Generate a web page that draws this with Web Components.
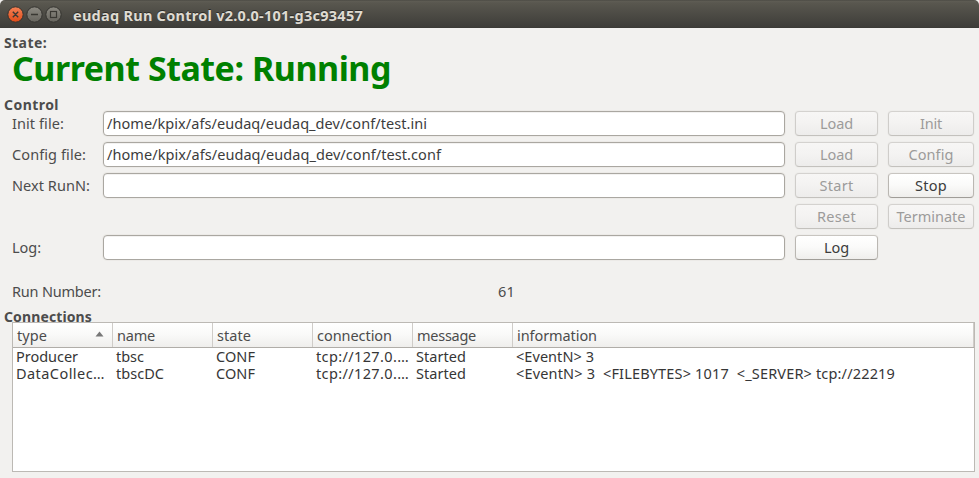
<!DOCTYPE html>
<html lang="en">
<head>
<meta charset="utf-8">
<title>eudaq Run Control</title>
<style>
html,body{margin:0;height:100%}
body{font:14.5px "Noto Sans","Open Sans",sans-serif;color:#4c4c4c;background:#f2f1ef;overflow:hidden}
</style>
</head>
<body>
<run-control></run-control>
<script>
const define = (name, html, setup) => customElements.define(name, class extends HTMLElement {
  connectedCallback() {
    if (this.shadowRoot) return;
    this.attachShadow({mode: 'open'}).innerHTML = html;
    if (setup) setup.call(this, this.shadowRoot);
  }
});

/* Text tracked to a given advance width (attribute w, px). */
define('fit-text', `<style>:host{display:inline-block;white-space:pre}span{display:inline-block}</style><span><slot></slot></span>`, function (root) {
  const span = root.querySelector('span'), w = +this.getAttribute('w');
  const n = this.textContent.length;
  if (w && n) {
    span.style.letterSpacing = ((w - span.getBoundingClientRect().width) / n) + 'px';
    this.style.width = w + 'px';
  }
});

define('title-bar', `<style>
:host{display:flex;align-items:center;height:28px;box-sizing:border-box;padding:1px 0 0 7px;gap:10px;color:#dfdbd2;font-weight:700;font-size:14.5px;line-height:26px;
background:linear-gradient(#45443f 0,#5f5d54 1px,#59574f 3px,#3e3d39 27px,#393834 28px);border-radius:5px 5px 0 0;text-shadow:0 -1px #2d2c28}
svg{display:block}
</style>
<svg width="56" height="18" viewBox="0 0 56 18">
<defs><linearGradient id="o" x2="0" y2="1"><stop stop-color="#f58256"/><stop offset="1" stop-color="#df4b18"/></linearGradient>
<linearGradient id="g" x2="0" y2="1"><stop stop-color="#8d8b83"/><stop offset="1" stop-color="#66645d"/></linearGradient></defs>
<g stroke="#34332f"><circle cx="8.5" cy="8.5" r="7.7" fill="url(#o)"/><circle cx="27.5" cy="8.5" r="7.7" fill="url(#g)"/><circle cx="46.5" cy="8.5" r="7.7" fill="url(#g)"/></g>
<g fill="none" stroke="#393833" stroke-width="1.4"><path d="M5.8 5.8l5.4 5.4M11.2 5.8l-5.4 5.4M24 8.5h7"/><rect x="43.5" y="5.5" width="6" height="6" stroke-width="1.2"/></g>
</svg><slot></slot>`);

define('group-title', `<style>:host{display:block;font-weight:700;font-size:14px;padding-left:4px;white-space:nowrap}</style><slot></slot>`);

define('text-field', `<style>:host{display:block;box-sizing:border-box;height:25px;line-height:23px;border:1px solid #aaa7a1;border-radius:4px;background:#fff;padding-left:3px;color:#3c3c3c;box-shadow:0 0 0 1px #eceae7,inset 0 1px #f3f2f1}</style><slot></slot>`);

define('push-button', `<style>
:host{display:block;box-sizing:border-box;height:25px;line-height:23px;text-align:center;border:1px solid #bab7b2;border-top-color:#c8c5c0;border-bottom-color:#a09d98;border-radius:4px;background:linear-gradient(#fff,#fbfbfa 45%,#efeeec);color:#3c3c3c;box-shadow:0 0 0 1px #eeedeb}
:host([disabled]){color:#9c9b9a;border-color:#d4d2cf #cfcdca #c3c1bd;background:linear-gradient(#f7f6f5,#f4f3f2 45%,#edeceb)}
</style><slot></slot>`);

define('connection-table', `<style>
:host{display:grid;box-sizing:border-box;grid-template-columns:100px 100px 100px 100px 100px 1fr;grid-template-rows:24px 1px 17px 17px;height:150px;border:1px solid #bcb9b4;background:#fff;color:#363636}
.h{display:flex;justify-content:space-between;align-items:center;box-sizing:border-box;padding:0 8px 0 4px;line-height:24px;border-right:1px solid #cfccc8;background:linear-gradient(#fff,#f9f9f8 50%,#efeeec);color:#4c4c4c}
.line{grid-column:1/-1;background:#b0ada8}
.c{padding-left:3px;line-height:17px;white-space:pre;height:17px}
svg{margin-top:-3px}
</style>`, function (root) {
  const heads = [['type',30],['name',38],['state',34],['connection',75],['message',59],['information',80]];
  const rows = [
    [['Producer',62],['tbsc',28],['CONF',39],['tcp://127.0.…',93],['Started',50],['<EventN> 3',78]],
    [['DataCollec…',89],['tbscDC',48],['CONF',39],['tcp://127.0.…',93],['Started',50],['<EventN> 3  <FILEBYTES> 1017  <_SERVER> tcp://22219',379]]];
  const cell = (cls, [t, w], extra = '') => {
    const d = document.createElement('div');
    d.className = cls;
    const f = document.createElement('fit-text');
    f.setAttribute('w', w);
    f.textContent = t;
    d.append(f);
    d.insertAdjacentHTML('beforeend', extra);
    root.append(d);
  };
  heads.forEach((h, i) => cell('h', h, i ? '' : '<svg width="9" height="6"><path d="M4.5.5L8.5 5.5H.5z" fill="#777"/></svg>'));
  root.append(Object.assign(document.createElement('div'), {className: 'line'}));
  rows.flat().forEach(r => cell('c', r));
});

define('run-control', `<style>
:host{display:flex;flex-direction:column;width:979px;height:478px;background:#f2f1ef}
.state{padding-top:7px;line-height:16px}
.big{color:#008000;font-weight:700;font-size:34px;line-height:34px;height:34px;padding-left:12px}
.control{line-height:15px;height:14px;margin-top:12px}
.form{display:grid;grid-template-columns:81px 682px 83px 86px;column-gap:10px;grid-auto-rows:25px;row-gap:6px;padding-left:12px;line-height:25px}
.a{grid-column:3}
.run{display:flex;margin-top:19px;height:25px;line-height:25px;padding-left:12px;gap:397px}
.conn{line-height:14px;height:12px;margin-top:6px}
connection-table{margin:0 4px 0 12px}
</style>
<title-bar><fit-text w="290">eudaq Run Control v2.0.0-101-g3c93457</fit-text></title-bar>
<group-title class="state"><fit-text w="43">State:</fit-text></group-title>
<div class="big"><fit-text w="379">Current State: Running</fit-text></div>
<group-title class="control"><fit-text w="55">Control</fit-text></group-title>
<div class="form">
<fit-text w="52">Init file:</fit-text><text-field><fit-text w="320">/home/kpix/afs/eudaq/eudaq_dev/conf/test.ini</fit-text></text-field><push-button disabled><fit-text w="33">Load</fit-text></push-button><push-button disabled><fit-text w="22">Init</fit-text></push-button>
<fit-text w="74">Config file:</fit-text><text-field><fit-text w="334">/home/kpix/afs/eudaq/eudaq_dev/conf/test.conf</fit-text></text-field><push-button disabled><fit-text w="33">Load</fit-text></push-button><push-button disabled><fit-text w="45">Config</fit-text></push-button>
<fit-text w="78">Next RunN:</fit-text><text-field></text-field><push-button disabled><fit-text w="34">Start</fit-text></push-button><push-button><fit-text w="32">Stop</fit-text></push-button>
<push-button class="a" disabled><fit-text w="39">Reset</fit-text></push-button><push-button disabled><fit-text w="69">Terminate</fit-text></push-button>
<fit-text w="29">Log:</fit-text><text-field></text-field><push-button><fit-text w="25">Log</fit-text></push-button>
</div>
<div class="run"><fit-text w="89">Run Number:</fit-text><fit-text w="17">61</fit-text></div>
<group-title class="conn"><fit-text w="88">Connections</fit-text></group-title>
<connection-table></connection-table>`);
</script>
</body>
</html>
